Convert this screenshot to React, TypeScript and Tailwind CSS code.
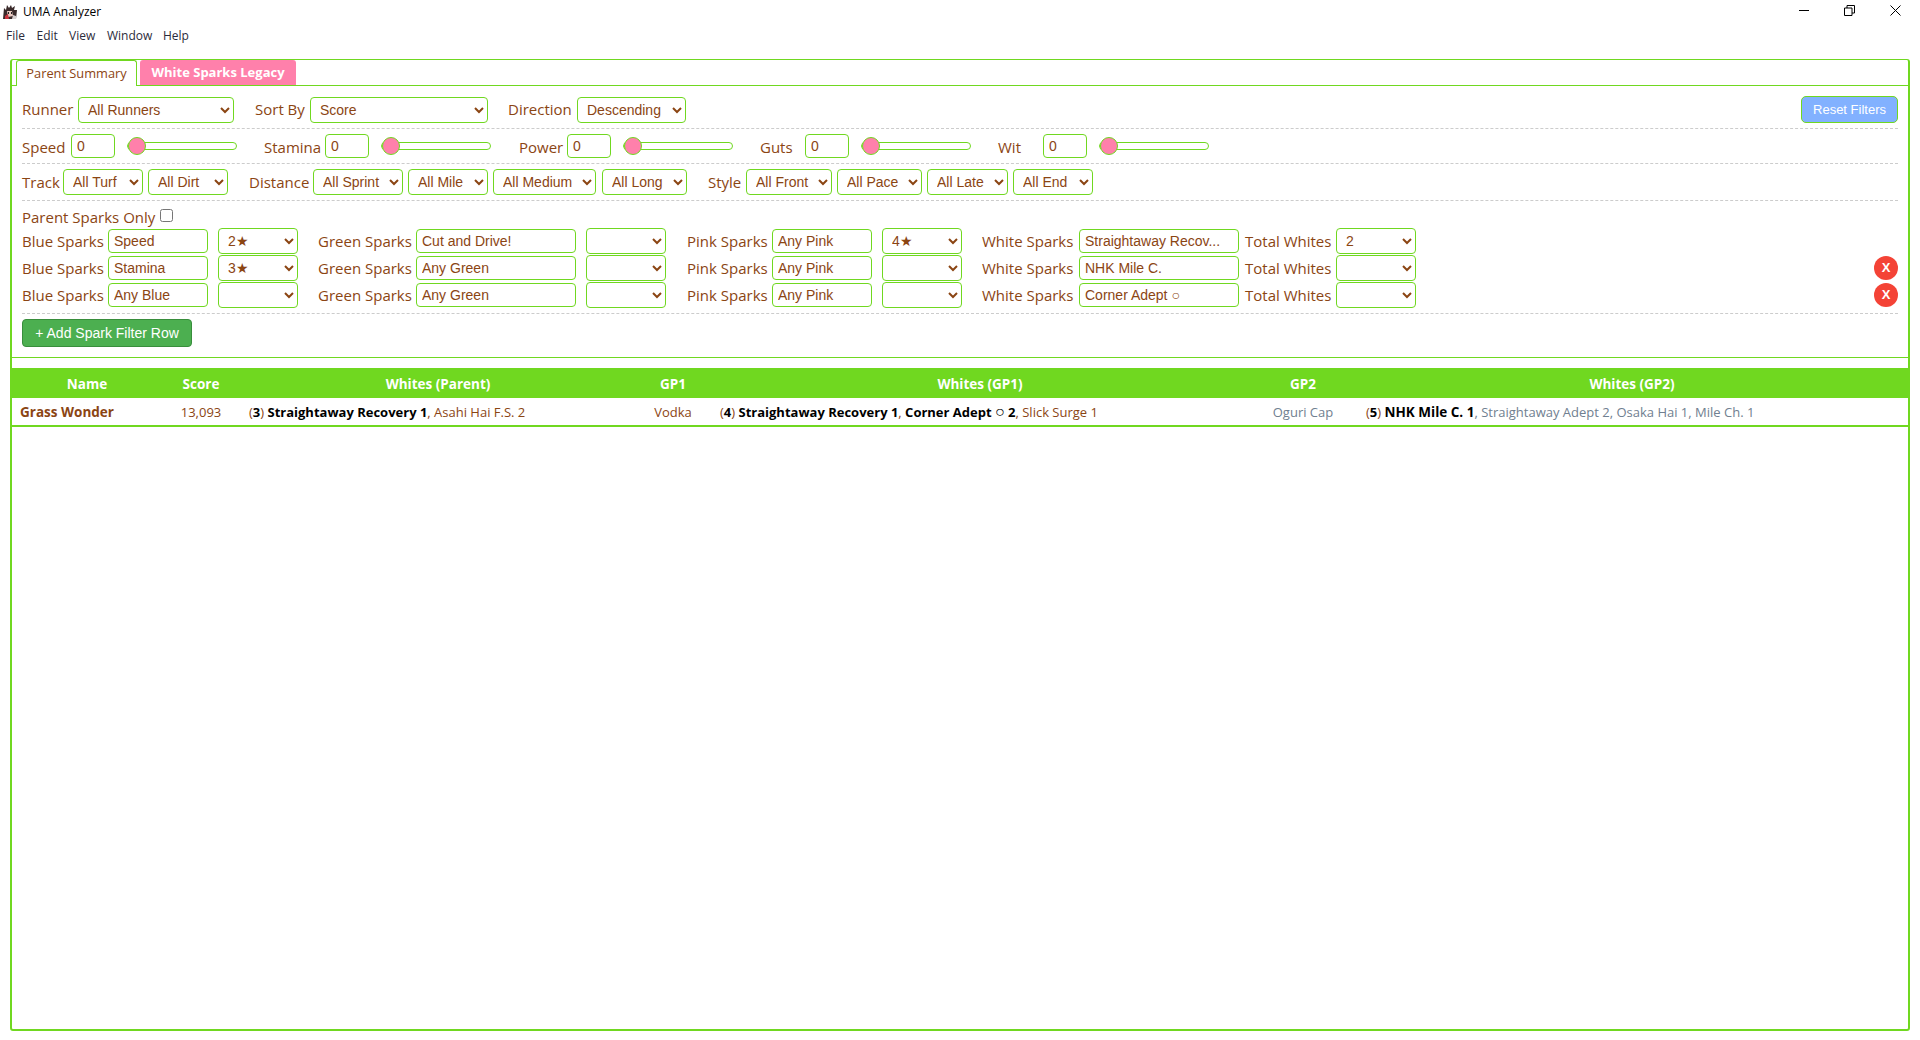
import React from 'react';

const selectCls =
  'h-[26px] rounded-[4px] border border-[#70d820] bg-white pl-[5px] text-[14px] text-[#8b4513] font-["Liberation_Sans",Arial,sans-serif] outline-none';
const inputCls =
  'h-[24px] rounded-[4px] border border-[#70d820] bg-white px-[5px] text-[14px] text-[#8b4513] font-["Liberation_Sans",Arial,sans-serif] outline-none text-ellipsis';
const labelCls = 'text-[15px] leading-[20px] text-[#8b4513] whitespace-nowrap mt-[2px]';
const sparkLabel = 'text-[15px] leading-[20px] text-[#8b4513] whitespace-nowrap';
const rowLine = 'border-b border-dashed border-[#cccccc]';

function Sel({ w, options, value, className = '' }: { w: string; options: string[]; value?: string; className?: string }) {
  return (
    <select defaultValue={value ?? options[0]} className={`${selectCls} ${w} ${className}`}>
      {options.map((o) => (
        <option key={o} value={o}>
          {o}
        </option>
      ))}
    </select>
  );
}

const stats = [
  { label: 'Speed', labelW: 'w-[44px]', gap: 'mr-[27px]' },
  { label: 'Stamina', labelW: 'w-[56px]', gap: 'mr-[28px]' },
  { label: 'Power', labelW: 'w-[43px]', gap: 'mr-[27px]' },
  { label: 'Guts', labelW: 'w-[40px]', gap: 'mr-[27px]' },
  { label: 'Wit', labelW: 'w-[40px]', gap: 'mr-[27px]' },
];

const sparkRows = [
  { blue: 'Speed', blueStar: '2★', green: 'Cut and Drive!', pinkStar: '4★', white: 'Straightaway Recov...', total: '2', remove: false },
  { blue: 'Stamina', blueStar: '3★', green: 'Any Green', pinkStar: '', white: 'NHK Mile C.', total: '', remove: true },
  { blue: 'Any Blue', blueStar: '', green: 'Any Green', pinkStar: '', white: 'Corner Adept ○', total: '', remove: true },
];

const stars = ['', '1★', '2★', '3★', '4★'];

function AppIcon() {
  return (
    <svg width="16" height="16" viewBox="0 0 16 16" className="shrink-0">
      <path d="M1 15 L2 4 L4 6 L5 1 L7 4 L9 1 L10 4 L13 2 L12 6 L15 6 L14 15 Z" fill="#3a2a2a" />
      <path d="M5 7 L10 7 L11 12 L6 13 Z" fill="#e8c8c0" />
      <path d="M3 12 L6 10 L7 15 L3 15 Z" fill="#c8323c" />
      <path d="M11 11 L14 12 L14 15 L10 15 Z" fill="#d8d0d0" />
      <rect x="6" y="8" width="1" height="2" fill="#222" />
      <rect x="9" y="8" width="1" height="2" fill="#222" />
    </svg>
  );
}

export default function App() {
  return (
    <div className='w-[1920px] h-[1040px] overflow-hidden bg-white font-["Open_Sans","Noto_Sans",sans-serif] text-[#8b4513]'>
      {/* title bar */}
      <div className="flex h-[24px] items-center pl-[2px] pr-[19px]">
        <AppIcon />
        <span className="ml-[5px] text-[12px] text-black">UMA Analyzer</span>
        <div className="mb-[4px] ml-auto flex items-center gap-[35px]">
          <svg width="10" height="10" viewBox="0 0 10 10"><path d="M0 5.5H10" stroke="#000" /></svg>
          <svg width="11" height="11" viewBox="0 0 11 11" fill="none" stroke="#000"><path d="M.5 3h7.5v7.5H.5z" /><path d="M3 3V.5h7.5V8H8" /></svg>
          <svg width="11" height="11" viewBox="0 0 11 11" fill="none" stroke="#000"><path d="M.5.5l10 10M10.5.5l-10 10" /></svg>
        </div>
      </div>
      <div className="flex h-[24px] items-center pl-[6px] text-[12px] text-[#2b2b3b]">
        <span className="w-[30.5px]">File</span>
        <span className="w-[32.5px]">Edit</span>
        <span className="w-[38px]">View</span>
        <span className="w-[56px]">Window</span>
        <span>Help</span>
      </div>

      {/* main panel */}
      <div className="mx-[10px] mt-[11px] h-[972px] rounded-[3px] border-2 border-t border-[#70d820]">
        <div className="flex h-[26px] items-end gap-[3px] border-b border-[#70d820] pl-[4px]">
          <div className="-mb-[1px] flex h-[26px] w-[121px] items-center justify-center rounded-t-[3px] border border-b-0 border-[#70d820] bg-white pt-[1px] text-[12.8px]">
            Parent Summary
          </div>
          <div className="flex h-[25px] w-[156px] items-center justify-center rounded-t-[3px] bg-[#ff80ab] pt-[1px] text-[13px] font-bold text-white">
            White Sparks Legacy
          </div>
        </div>

        <div className="border-b border-[#70d820] px-[10px]">
          <div className={`flex h-[43px] items-start pt-[11px] ${rowLine}`}>
            <span className={`${labelCls} w-[51px]`}>Runner</span>
            <Sel w="w-[156px] ml-[5px]" options={['All Runners']} />
            <span className={`${labelCls} ml-[21px] w-[50px]`}>Sort By</span>
            <Sel w="w-[178px] ml-[5px]" options={['Score']} />
            <span className={`${labelCls} ml-[20px] w-[64px]`}>Direction</span>
            <Sel w="w-[109px] ml-[5px]" options={['Descending']} />
            <button className='ml-auto -mt-[1px] h-[27px] w-[97px] rounded-[5px] border border-[#70d820] bg-[#82b1ff] text-[13px] text-white font-["Liberation_Sans",Arial,sans-serif]'>
              Reset Filters
            </button>
          </div>

          <div className={`flex h-[35px] items-start pt-[5px] ${rowLine}`}>
            {stats.map((s) => (
              <div key={s.label} className={`flex items-start ${s.gap}`}>
                <span className={`${labelCls} mt-[3px] mr-[5px] ${s.labelW}`}>{s.label}</span>
                <input defaultValue="0" className={`${inputCls} w-[44px]`} />
                <input
                  type="range"
                  defaultValue={0}
                  className="ml-[12px] mt-[3px] h-[18px] w-[110px] appearance-none rounded-full bg-transparent [&::-webkit-slider-runnable-track]:h-[8px] [&::-webkit-slider-runnable-track]:rounded-full [&::-webkit-slider-runnable-track]:border [&::-webkit-slider-runnable-track]:border-[#70d820] [&::-webkit-slider-runnable-track]:bg-white [&::-webkit-slider-thumb]:-mt-[6px] [&::-webkit-slider-thumb]:h-[18px] [&::-webkit-slider-thumb]:w-[18px] [&::-webkit-slider-thumb]:appearance-none [&::-webkit-slider-thumb]:rounded-full [&::-webkit-slider-thumb]:border [&::-webkit-slider-thumb]:border-[#70d820] [&::-webkit-slider-thumb]:bg-[#ff80ab]"
                />
              </div>
            ))}
          </div>

          <div className={`flex h-[37px] items-start pt-[5px] ${rowLine}`}>
            <span className={`${labelCls} mt-[3px] w-[36px]`}>Track</span>
            <Sel w="w-[80px] ml-[5px]" options={['All Turf']} />
            <Sel w="w-[80px] ml-[5px]" options={['All Dirt']} />
            <span className={`${labelCls} mt-[3px] ml-[21px] w-[59px]`}>Distance</span>
            <Sel w="w-[90px] ml-[5px]" options={['All Sprint']} />
            <Sel w="w-[80px] ml-[5px]" options={['All Mile']} />
            <Sel w="w-[103px] ml-[5px]" options={['All Medium']} />
            <Sel w="w-[85px] ml-[6px]" options={['All Long']} />
            <span className={`${labelCls} mt-[3px] ml-[21px] w-[33px]`}>Style</span>
            <Sel w="w-[86px] ml-[5px]" options={['All Front']} />
            <Sel w="w-[85px] ml-[5px]" options={['All Pace']} />
            <Sel w="w-[81px] ml-[5px]" options={['All Late']} />
            <Sel w="w-[80px] ml-[5px]" options={['All End']} />
          </div>

          <div className={`pb-[5px] pt-[5px] ${rowLine}`}>
            <div className="flex h-[21px] items-center">
              <span className="text-[15px] leading-[20px]">Parent Sparks Only</span>
              <input type="checkbox" className="mb-[3px] ml-[5px] h-[13px] w-[13px]" />
            </div>
            {sparkRows.map((r) => (
              <div key={r.white} className="flex h-[27px] items-center">
                <span className={`${sparkLabel} w-[86px]`}>Blue Sparks</span>
                <input defaultValue={r.blue} className={`${inputCls} w-[100px]`} />
                <Sel w="w-[80px] ml-[10px]" options={stars} value={r.blueStar} />
                <span className={`${sparkLabel} ml-[20px] w-[98px]`}>Green Sparks</span>
                <input defaultValue={r.green} className={`${inputCls} w-[160px]`} />
                <Sel w="w-[80px] ml-[10px]" options={stars} value="" />
                <span className={`${sparkLabel} ml-[21px] w-[85px]`}>Pink Sparks</span>
                <input defaultValue="Any Pink" className={`${inputCls} w-[100px]`} />
                <Sel w="w-[80px] ml-[10px]" options={stars} value={r.pinkStar} />
                <span className={`${sparkLabel} ml-[20px] w-[97px]`}>White Sparks</span>
                <input defaultValue={r.white} className={`${inputCls} w-[160px]`} />
                <span className={`${sparkLabel} ml-[6px] w-[91px]`}>Total Whites</span>
                <Sel w="w-[80px]" options={['', '1', '2', '3']} value={r.total} />
                {r.remove && (
                  <button className='ml-auto flex h-[24px] w-[24px] items-center justify-center rounded-full bg-[#f44336] text-[13px] font-bold text-white font-["Liberation_Sans",Arial,sans-serif]'>
                    X
                  </button>
                )}
              </div>
            ))}
          </div>

          <div className="pb-[10px] pt-[5px]">
            <button className='h-[28px] w-[170px] rounded-[4px] border border-[#388e3c] bg-[#4caf50] text-[14px] text-white font-["Liberation_Sans",Arial,sans-serif]'>
              + Add Spark Filter Row
            </button>
          </div>
        </div>

        <table className="mt-[10px] w-full table-fixed border-collapse text-[13px]">
          <colgroup>
            <col className="w-[150px]" />
            <col className="w-[78px]" />
            <col className="w-[396px]" />
            <col className="w-[74px]" />
            <col className="w-[540px]" />
            <col className="w-[106px]" />
            <col />
          </colgroup>
          <thead>
            <tr className="h-[30px] bg-[#70d820] text-white">
              {['Name', 'Score', 'Whites (Parent)', 'GP1', 'Whites (GP1)', 'GP2', 'Whites (GP2)'].map((h) => (
                <th key={h} className="pt-[2px] text-center text-[13.5px] font-bold">
                  {h}
                </th>
              ))}
            </tr>
          </thead>
          <tbody>
            <tr className="h-[28px] border-b-2 border-[#70d820] whitespace-nowrap">
              <td className="pl-[8px] pt-[2px] text-[13.5px] font-bold">Grass Wonder</td>
              <td className="pt-[2px] text-center">13,093</td>
              <td className="pl-[9px] pt-[2px]">
                (<b className="text-black">3</b>) <b className="text-black">Straightaway Recovery 1</b>, Asahi Hai F.S. 2
              </td>
              <td className="pt-[2px] text-center">Vodka</td>
              <td className="pl-[10px] pt-[2px]">
                (<b className="text-black">4</b>) <b className="text-black">Straightaway Recovery 1</b>, <b className="text-black">Corner Adept</b>{' '}
                <span className="text-[16px] leading-[16px] text-black">○</span> <b className="text-black">2</b>, Slick Surge 1
              </td>
              <td className="pt-[2px] text-center text-[#708090]">Oguri Cap</td>
              <td className="pl-[10px] pt-[2px] text-[#708090]">
                <span className="text-[#8b4513]">(</span>
                <b className="text-black">5</b>
                <span className="text-[#8b4513]">)</span> <b className="text-[13.5px] text-black">NHK Mile C. 1</b>, Straightaway Adept 2, Osaka Hai 1, Mile Ch. 1
              </td>
            </tr>
          </tbody>
        </table>
      </div>
    </div>
  );
}
